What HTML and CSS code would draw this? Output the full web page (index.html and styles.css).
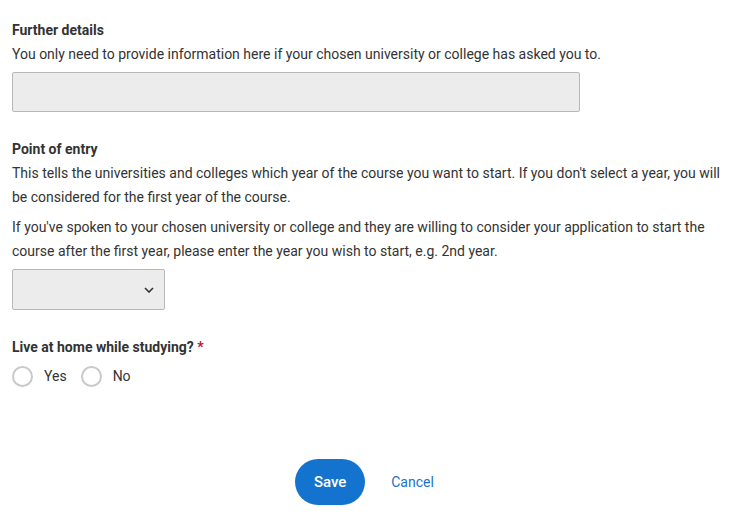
FILE: index.html
```html
<!DOCTYPE html>
<html>
<head>
<meta charset="utf-8">
<link rel="stylesheet" href="styles.css">
</head>
<body>
<form class="form">
  <div class="field">
    <div class="label">Further details</div>
    <p class="hint">You only need to provide information here if your chosen university or college has asked you to.</p>
    <div class="input"></div>
  </div>
  <div class="field">
    <div class="label">Point of entry</div>
    <p class="hint">This tells the universities and colleges which year of the course you want to start. If you don't select a year, you will be considered for the first year of the course.</p>
    <p class="hint hint-gap">If you've spoken to your chosen university or college and they are willing to consider your application to start the course after the first year, please enter the year you wish to start, e.g. 2nd year.</p>
    <div class="select">
      <svg class="chev" width="10" height="6" viewBox="0 0 10 6"><path d="M1 1l4 4 4-4" fill="none" stroke="#333" stroke-width="1.6"/></svg>
    </div>
  </div>
  <div class="field">
    <div class="label">Live at home while studying? <span class="req">*</span></div>
    <div class="radios">
      <label class="radio"><span class="circle"></span>Yes</label>
      <label class="radio"><span class="circle"></span>No</label>
    </div>
  </div>
  <div class="actions">
    <button type="button" class="save">Save</button>
    <a class="cancel">Cancel</a>
  </div>
</form>
</body>
</html>
```
FILE: styles.css
```css
* { box-sizing: border-box; }
body {
  margin: 0;
  font-family: Roboto, "Liberation Sans", sans-serif;
  font-size: 14px;
  line-height: 24px;
  color: #333;
  background: #fff;
}
.form { padding: 18px 12px 0 12px; }
.field { margin-bottom: 25px; }
.label { font-weight: 700; color: #333; }
.hint { margin: 0; }
.hint-gap { margin-top: 6px; }
.input {
  margin-top: 6px;
  width: 568px;
  height: 40px;
  background: #ececec;
  border: 1px solid #b8b8b8;
  border-radius: 2px;
}
.select {
  margin-top: 6px;
  width: 153px;
  height: 41px;
  background: #ececec;
  border: 1px solid #b8b8b8;
  border-radius: 2px;
  display: flex;
  align-items: center;
  justify-content: flex-end;
  padding-right: 10px;
}
.chev { display: block; }
.req { color: #c8102e; }
.radios { display: flex; gap: 14px; margin-top: 5px; }
.radio { display: flex; align-items: center; gap: 11px; }
.circle {
  width: 21px; height: 21px;
  border: 2px solid #c9c9c9;
  border-radius: 50%;
  background: #fff;
}
.actions {
  display: flex;
  justify-content: center;
  align-items: center;
  padding-right: 17px;
  margin-top: 71px;
}
.save {
  height: 46px;
  width: 70px;
  border: none;
  border-radius: 23px;
  background: #1473ce;
  color: #fff;
  font-family: Roboto, "Liberation Sans", sans-serif;
  font-size: 15px;
  font-weight: 500;
  padding: 0;
}
.cancel {
  margin-left: 26px;
  color: #1a73c8;
  font-size: 14px;
}
```
